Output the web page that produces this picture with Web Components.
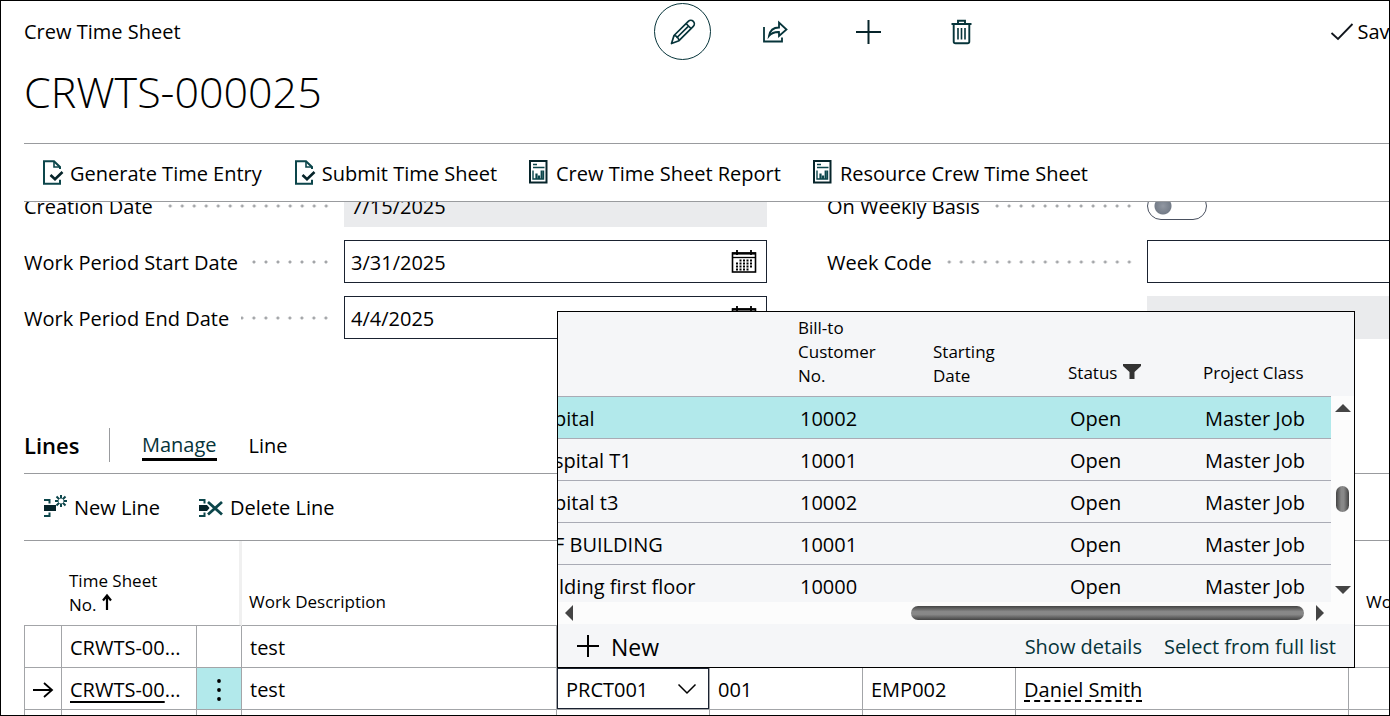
<!DOCTYPE html>
<html lang="en">
<head>
<meta charset="utf-8">
<title>Crew Time Sheet</title>
<style>
  html, body { margin: 0; height: 100%; }
  body { font: 20px/28px "Open Sans", "Noto Sans", sans-serif; color: #000; background: #fff; overflow: hidden; }
</style>
</head>
<body>
<time-sheet-page></time-sheet-page>

<script>
const define = (name, html, setup) => {
  const tpl = document.createElement('template');
  tpl.innerHTML = html;
  customElements.define(name, class extends HTMLElement {
    connectedCallback() {
      if (this.shadowRoot) return;
      this.attachShadow({ mode: 'open' }).append(tpl.content.cloneNode(true));
      if (setup) setup(this, this.shadowRoot);
    }
  });
};

const ICONS = {
  pencil: [26, 26, '<g fill="none" stroke="#06343a" stroke-width="1.7" stroke-linejoin="round"><path d="M1.500 24.500 4 16.500 18.300 2.300a3.500 3.500 0 0 1 5 5L9 21.700Z"/><path d="M16 4.500l5 5M4 16.500c2.500.3 4.500 2.500 5 5M6.500 19 19 6.700"/></g>'],
  share: [26, 24, '<g fill="none" stroke="#06343a" stroke-width="1.8"><path d="M1 7V21.500h18v-4"/><path d="M6 16C7 10 10 7.500 16 7.500V2.500l7.500 7-7.500 6.500V12c-5-.2-7.500 1-10 4Z"/></g>'],
  plus: [26, 26, '<path d="M12.500 1v24M0 13h25" stroke="#06242a" stroke-width="2" fill="none"/>'],
  plussmall: [22, 22, '<path d="M11 0v22M0 11h22" stroke="#000" stroke-width="2" fill="none"/>'],
  trash: [22, 26, '<g fill="none" stroke="#06343a"><path d="M.5 5h20" stroke-width="2"/><path d="M7 4V1.800h7V4M2.700 5v17.500c0 1.200.6 1.800 1.800 1.800h12c1.200 0 1.800-.6 1.800-1.800V5" stroke-width="1.900"/><path d="M7 9v11.500M10.500 9v11.500M14 9v11.500" stroke-width="1.600"/></g>'],
  check: [24, 20, '<path d="M1.500 11 8 17 22.500 2" fill="none" stroke="#10151c" stroke-width="1.800"/>'],
  doccheck: [22, 26, '<g fill="none" stroke="#0c464b"><path d="M18 9V7L12 1.200H2v22.600h16v-4" stroke-width="2"/><path d="M12 1.500V7h6" stroke-width="1.600"/><path d="M8.500 15 13 19.200 20.500 12" stroke="#06242a" stroke-width="2.600"/></g>'],
  report: [21, 28, '<rect x="1" y="2" width="16.500" height="21.500" fill="#fff" stroke="#06242a" stroke-width="2"/><path d="M4 5.500h4M4 8.500h11.500" stroke="#0c464b" stroke-width="1.600"/><path d="M4 11.500v8.500H14.500V11.500" stroke="#0c464b" stroke-width="1.400" fill="none"/><path d="M7.500 20v-5.500M10 20v-3.500M12.700 20v-8.500" stroke="#0c464b" stroke-width="2.200"/>'],
  newline: [26, 24, '<g fill="none" stroke="#0c464b" stroke-width="2"><path d="M2 5h5.500v3.500M2 21h5.500v-3.500"/><path d="M19 0v12M13 6h12M14.500 1.500l9 9M23.500 1.500l-9 9"/></g><rect x="2" y="10" width="12" height="6" fill="#06242a"/><circle cx="19" cy="6" r="2.500" fill="#fff"/>'],
  delline: [26, 24, '<g fill="none" stroke="#0c464b" stroke-width="2"><path d="M1 5h5.500v3.500M1 21h5.500v-3.500"/></g><path d="M1 10h8l2.500 3L9 16H1Z" fill="#06242a"/><path d="M10 7 24 19.500M24 7 10 19.500" stroke="#0c464b" stroke-width="2.800"/>'],
  calendar: [26, 24, '<g fill="none" stroke="#000"><rect x="1.500" y="3" width="23" height="19" stroke-width="1.600"/><path d="M1 3.500h24" stroke-width="2.200"/><path d="M2 7.500h22" stroke-width="1.300"/><path d="M6 0v5M20 0v5" stroke-width="1.800"/><path d="M8.500 10.500h14M5 13.500h17.500M5 16.500h17.500M5 19.500h14" stroke-width="1.800" stroke-dasharray="2 1.500"/></g>'],
  arrow: [22, 20, '<path d="M1 10h19M12 3l8 7-8 7" fill="none" stroke="#000" stroke-width="1.800"/>'],
  up: [12, 18, '<path d="M6 17V3M2 7.500 6 2.500l4 5" fill="none" stroke="#000" stroke-width="2.200"/>'],
  dots: [6, 24, '<g fill="#000"><circle cx="3" cy="3" r="1.900"/><circle cx="3" cy="12" r="1.900"/><circle cx="3" cy="21" r="1.900"/></g>'],
  filter: [20, 18, '<path d="M1 1h18v2L12.500 9v7h-5V9L1 3Z" fill="#333"/>'],
  chevron: [20, 12, '<path d="M1.500 1.500 10 10l8.500-8.500" fill="none" stroke="#000" stroke-width="1.500"/>'],
  triup: [16, 8, '<path d="M0 8 8 0l8 8Z" fill="#444"/>'],
  tridown: [16, 8, '<path d="M0 0h16L8 8Z" fill="#444"/>'],
  trileft: [8, 16, '<path d="M8 0v16L0 8Z" fill="#444"/>'],
  triright: [8, 16, '<path d="M0 0v16l8-8Z" fill="#444"/>']
};

define('app-icon', '<style>:host{display:inline-flex;flex:none}svg{display:block}</style>', (el, root) => {
  const [w, h, body] = ICONS[el.getAttribute('name')];
  root.innerHTML += `<svg width="${w}" height="${h}" viewBox="0 0 ${w} ${h}" aria-hidden="true">${body}</svg>`;
});

define('icon-button', `
<style>
  :host { display: block; }
  button { box-sizing: border-box; width: 57px; height: 57px; padding: 0; border: 0; border-radius: 50%; background: none; display: flex; align-items: center; justify-content: center; }
  :host([active]) button { border: 1px solid #06343a; }
</style>
<button type="button"><slot></slot></button>`, (el, root) => {
  root.querySelector('button').setAttribute('aria-label', el.getAttribute('label'));
});

define('action-button', `
<style>
  :host { display: block; }
  button { display: flex; align-items: center; gap: var(--icon-gap, 6px); padding: 0; border: 0; background: none; font: inherit; color: inherit; white-space: nowrap; }
  span { padding-top: 2px; }
</style>
<button type="button"><slot name="icon"></slot><span><slot></slot></span></button>`);

const captionStyle = `
  .caption { display: flex; align-items: center; padding-right: 12px; white-space: nowrap; }
  label { padding-top: 2px; }
  .leader { flex: 1; height: 12px; margin-left: 12px; background: radial-gradient(circle, #a3a5a8 1px, #a3a5a800 2px) right center / 12px 12px repeat-x; }`;

define('form-field', `
<style>
  :host { display: grid; grid-template-columns: 320px 1fr; height: 43px; }
  ${captionStyle}
  .box { box-sizing: border-box; display: flex; align-items: center; border: 1px solid #1a2230; padding-right: 9px; background: #fff; min-width: 0; }
  :host([readonly]) .box { background: #eaebed; border-color: #eaebed; }
  input { flex: 1; min-width: 0; height: 100%; box-sizing: border-box; padding: 2px 6px 0; border: 0; background: none; font: inherit; color: inherit; outline: 0; }
</style>
<div class="caption"><label for="f"></label><span class="leader"></span></div>
<div class="box"><input id="f" type="text"><slot></slot></div>`, (el, root) => {
  root.querySelector('label').textContent = el.getAttribute('label') || '';
  if (!el.getAttribute('label')) root.querySelector('.leader').style.visibility = 'hidden';
  const input = root.querySelector('input');
  input.value = el.getAttribute('value') || '';
  input.readOnly = el.hasAttribute('readonly');
});

define('switch-field', `
<style>
  :host { display: grid; grid-template-columns: 320px 1fr; align-items: center; height: 43px; }
  ${captionStyle}
  input { appearance: none; display: block; margin: 0; width: 60px; height: 28px; box-sizing: border-box; border: 1px solid #4a5160; border-radius: 14px; background: radial-gradient(circle at 15px 13px, #9298a2 0, #747c88 8px, #747c8800 9px); }
</style>
<div class="caption"><label for="s"></label><span class="leader"></span></div>
<input id="s" type="checkbox">`, (el, root) => {
  root.querySelector('label').textContent = el.getAttribute('label');
});

define('page-header', `
<style>
  :host { display: block; padding: 2px 0 0 23px; }
  .bar { display: grid; grid-template-columns: 630px auto 1fr; align-items: center; }
  .tools { display: flex; gap: 36px; }
  .saved { display: flex; align-items: center; justify-content: flex-end; gap: 3px; margin-right: -24px; }
  h1 { margin: 0; padding: 2px 0 21px; font-weight: 300; font-size: 43px; line-height: 60px; color: #000; }
</style>
<div class="bar">
  <span>Crew Time Sheet</span>
  <div class="tools">
    <icon-button active label="Edit"><app-icon name="pencil"></app-icon></icon-button>
    <icon-button label="Share"><app-icon name="share"></app-icon></icon-button>
    <icon-button label="New"><app-icon name="plus"></app-icon></icon-button>
    <icon-button label="Delete"><app-icon name="trash"></app-icon></icon-button>
  </div>
  <span class="saved"><app-icon name="check"></app-icon>Saved</span>
</div>
<h1>CRWTS-000025</h1>`);

define('action-bar', `
<style>
  :host { display: flex; align-items: center; gap: 32px; height: 57px; margin-left: 23px; padding-left: 18px; border-top: 1px solid #999b9e; border-bottom: 1px solid #999b9e; }
</style>
<slot></slot>`);

define('details-form', `
<style>
  :host { display: block; overflow: hidden; padding: 0 0 89px 23px; }
  .grid { display: grid; grid-template-columns: repeat(2, minmax(743px, 1fr)); gap: 13px 60px; margin-top: -18px; }
</style>
<div class="grid">
  <form-field label="Creation Date" value="7/15/2025" readonly></form-field>
  <switch-field label="On Weekly Basis"></switch-field>
  <form-field label="Work Period Start Date" value="3/31/2025"><app-icon name="calendar"></app-icon></form-field>
  <form-field label="Week Code"></form-field>
  <form-field label="Work Period End Date" value="4/4/2025"><app-icon name="calendar"></app-icon></form-field>
  <form-field readonly></form-field>
</div>`);

define('lines-toolbar', `
<style>
  :host { display: block; margin-left: 23px; }
  .tabs { box-sizing: border-box; display: flex; align-items: center; height: 46px; padding-bottom: 12px; border-bottom: 1px solid #999b9e; }
  h2 { margin: 0 32px 0 0; width: 86px; box-sizing: border-box; border-right: 1px solid #999b9e; font-size: 22px; line-height: 34px; font-weight: 600; }
  a { color: inherit; text-decoration: none; margin: 2px 32px 0 0; }
  a.on { color: #06343a; border-bottom: 3px solid #000; line-height: 26px; margin-top: 4px; }
  .actions { box-sizing: border-box; display: flex; align-items: center; gap: 38px; height: 67px; padding-left: 18px; border-bottom: 1px solid #999b9e; }
</style>
<div class="tabs"><h2>Lines</h2><a class="on" href="#manage">Manage</a><a href="#line">Line</a></div>
<div class="actions">
  <action-button><app-icon slot="icon" name="newline"></app-icon>New Line</action-button>
  <action-button><app-icon slot="icon" name="delline"></app-icon>Delete Line</action-button>
</div>`);

define('project-lookup', `
<style>
  :host { display: block; box-sizing: border-box; border: 1px solid #000; background: #f5f6f8; color: #000; }
  .view { height: 290px; display: grid; grid-template-columns: 1fr 23px; overflow: hidden; }
  .list { overflow: hidden; height: 290px; }
  table { border-collapse: collapse; table-layout: fixed; width: 100%; }
  th, td { padding: 0 0 0 8px; text-align: left; white-space: nowrap; box-sizing: border-box; }
  th { height: 84px; vertical-align: bottom; padding-bottom: 8px; padding-left: 6px; font-size: 17px; line-height: 24px; font-weight: 400; }
  th.single { padding-bottom: 11px; }
  th app-icon { vertical-align: -2px; }
  td { height: 42px; border-top: 1px solid #a9abb5; padding-top: 4px; }
  td:first-child { padding-left: 0; }
  td:first-child span { display: block; overflow: hidden; text-indent: -4px; }
  tr.sel td { background: #b2e9eb; }
  .vbar { margin-top: 84px; background: #fcfcfc; display: flex; flex-direction: column; align-items: center; justify-content: space-between; padding: 8px 0; }
  .vthumb { width: 13px; height: 26px; border-radius: 7px; background: linear-gradient(90deg, #444, #888 40%, #888 60%, #444); }
  .hbar { display: grid; grid-template-columns: 8px 1fr 8px; align-items: center; height: 22px; padding: 0 30px 0 7px; background: #fcfcfc; }
  .hthumb { justify-self: end; width: 393px; height: 14px; margin-right: 12px; border-radius: 7px; background: linear-gradient(#444, #888 40%, #888 60%, #444); }
  .foot { display: flex; align-items: center; gap: 22px; height: 43px; padding: 0 18px 0 19px; }
  .foot action-button { flex: 1; font-size: 23px; --icon-gap: 12px; }
  a { color: #06343a; text-decoration: none; white-space: nowrap; padding-top: 3px; }
</style>
<div class="view">
  <div class="list"><table>
    <colgroup><col><col style="width:135px"><col style="width:135px"><col style="width:135px"><col style="width:134px"></colgroup>
    <thead><tr><th></th><th>Bill-to<br>Customer<br>No.</th><th>Starting<br>Date</th><th class="single">Status <app-icon name="filter"></app-icon></th><th class="single">Project Class</th></tr></thead>
    <tbody></tbody>
  </table></div>
  <div class="vbar"><app-icon name="triup"></app-icon><span class="vthumb"></span><app-icon name="tridown"></app-icon></div>
</div>
<div class="hbar"><app-icon name="trileft"></app-icon><span class="hthumb"></span><app-icon name="triright"></app-icon></div>
<div class="foot"><action-button><app-icon slot="icon" name="plussmall"></app-icon>New</action-button><a href="#details">Show details</a><a href="#list">Select from full list</a></div>`, (el, root) => {
  const rows = [['pital', '10002'], ['spital T1', '10001'], ['pital t3', '10002'], ['F BUILDING', '10001'], ['ilding first floor', '10000']];
  root.querySelector('tbody').innerHTML = rows.map(([n, c], i) =>
    `<tr class="${i ? '' : 'sel'}"><td><span>${n}</span></td><td>${c}</td><td></td><td>Open</td><td>Master Job</td></tr>`).join('');
});

define('lines-table', `
<style>
  :host { display: block; margin-left: 23px; }
  table { border-collapse: separate; border-spacing: 0; table-layout: fixed; width: 1544px; }
  th, td { box-sizing: border-box; text-align: left; white-space: nowrap; padding: 0 0 0 8px; }
  th { height: 85px; vertical-align: bottom; padding-bottom: 8px; padding-left: 7px; font-size: 17px; line-height: 24px; font-weight: 400; border-bottom: 1px solid #a3a5a8; }
  th.low { padding-bottom: 11px; }
  th.freeze { border-right: 3px solid #f0f0f0; }
  th.far { padding-left: 17px; }
  td { height: 42px; padding-top: 2px; border-bottom: 1px solid #a3a5a8; border-right: 1px solid #a3a5a8; overflow: hidden; }
  td:first-child { border-left: 1px solid #a3a5a8; }
  td.mark, td.more { text-align: center; padding: 0; }
  td app-icon { vertical-align: middle; }
  td.more { background: #b2e9eb; }
  td.cell { position: relative; overflow: visible; padding: 0; }
  select { appearance: none; display: block; width: 152px; height: 41px; box-sizing: border-box; border: 1px solid #1a2230; border-radius: 0; background: #fff; padding: 2px 8px 0; margin: 0; font: inherit; color: #000; }
  td.cell > app-icon { position: absolute; right: 12px; top: 15px; pointer-events: none; }
  project-lookup { position: absolute; left: 0; bottom: 100%; width: 798px; z-index: 2; }
  a { color: inherit; text-decoration: underline 2px; text-underline-offset: 4px; text-decoration-skip-ink: none; }
  a.person { text-decoration-style: dashed; }
</style>
<table>
  <colgroup><col style="width:38px"><col style="width:135px"><col style="width:45px"><col style="width:315px"><col style="width:153px"><col style="width:153px"><col style="width:153px"><col style="width:333px"><col></colgroup>
  <thead><tr><th></th><th>Time Sheet<br>No. <app-icon name="up"></app-icon></th><th class="freeze"></th><th class="low">Work Description</th><th></th><th></th><th></th><th></th><th class="low far">Work Type</th></tr></thead>
  <tbody>
    <tr><td></td><td>CRWTS-00...</td><td></td><td>test</td><td></td><td></td><td></td><td></td><td></td></tr>
    <tr><td class="mark"><app-icon name="arrow"></app-icon></td><td><a href="#sheet">CRWTS-00</a>...</td><td class="more"><app-icon name="dots"></app-icon></td><td>test</td>
      <td class="cell"><select aria-label="Project No."><option>PRCT001</option></select><app-icon name="chevron"></app-icon><project-lookup></project-lookup></td>
      <td>001</td><td>EMP002</td><td><a class="person" href="#person">Daniel Smith</a></td><td></td></tr>
    <tr><td></td><td></td><td></td><td></td><td></td><td></td><td></td><td></td><td></td></tr>
  </tbody>
</table>`);

define('time-sheet-page', `
<style>
  :host { display: block; box-sizing: border-box; height: 100vh; border: 1px solid #000; overflow: hidden; background: #fff; }
</style>
<page-header></page-header>
<action-bar>
  <action-button><app-icon slot="icon" name="doccheck"></app-icon>Generate Time Entry</action-button>
  <action-button><app-icon slot="icon" name="doccheck"></app-icon>Submit Time Sheet</action-button>
  <action-button><app-icon slot="icon" name="report"></app-icon>Crew Time Sheet Report</action-button>
  <action-button><app-icon slot="icon" name="report"></app-icon>Resource Crew Time Sheet</action-button>
</action-bar>
<details-form></details-form>
<lines-toolbar></lines-toolbar>
<lines-table></lines-table>`);
</script>
</body>
</html>
